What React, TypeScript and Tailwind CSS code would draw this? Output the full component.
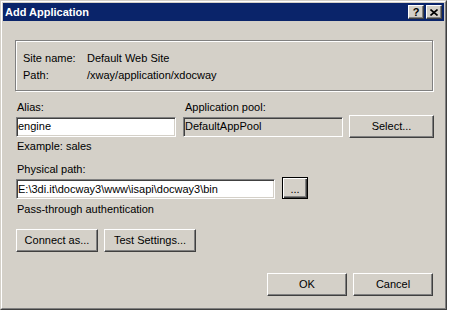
import React from "react";

const font = "font-['Liberation_Sans',Arial,sans-serif]";

const Btn = ({ label, w }: { label: string; w: string }) => (
  <button
    type="button"
    className={`${w} h-[23px] bg-[#d4d0c8] border border-t-white border-l-white border-r-[#404040] border-b-[#404040] shadow-[inset_-1px_-1px_0_#808080] text-[11px] leading-[13px] text-black flex items-center justify-center`}
  >
    {label}
  </button>
);

const Field = ({ value, w, readOnly }: { value: string; w: string; readOnly?: boolean }) => (
  <div
    className={`${w} h-[20px] ${readOnly ? "bg-[#d4d0c8]" : "bg-white"} border border-t-[#808080] border-l-[#808080] border-r-white border-b-white shadow-[inset_1px_1px_0_#404040,inset_-1px_-1px_0_#d4d0c8] pl-[1px] flex items-center text-[11px] leading-[13px] text-black whitespace-nowrap overflow-hidden`}
  >
    {value}
  </div>
);

export default function App() {
  return (
    <div className={`w-[449px] h-[312px] bg-white ${font} text-[11px] text-black`}>
      <div className="w-[447px] h-[310px] border border-t-[#d4d0c8] border-l-[#d4d0c8] border-r-[#404040] border-b-[#404040]">
        <div className="w-full h-full border border-t-white border-l-white border-r-[#808080] border-b-[#808080] bg-[#d4d0c8] p-[1px] flex flex-col">
          {/* title bar */}
          <div className="h-[18px] bg-[#0a246a] flex items-center justify-between pl-[2px] pr-[2px]">
            <span className="text-white font-bold text-[11px] leading-[13px]">Add Application</span>
            <div className="flex items-center gap-[2px]">
              <div className="w-[16px] h-[14px] bg-[#d4d0c8] border border-t-white border-l-white border-r-[#404040] border-b-[#404040] shadow-[inset_-1px_-1px_0_#808080] flex items-center justify-center">
                <span className="font-bold text-[11px] leading-[11px] text-black">?</span>
              </div>
              <div className="w-[16px] h-[14px] bg-[#d4d0c8] border border-t-white border-l-white border-r-[#404040] border-b-[#404040] shadow-[inset_-1px_-1px_0_#808080] flex items-center justify-center">
                <svg width="8" height="7" viewBox="0 0 8 7">
                  <path d="M0.5 0.5 L7.5 6.5 M7.5 0.5 L0.5 6.5" stroke="#000" strokeWidth="1.6" />
                </svg>
              </div>
            </div>
          </div>

          {/* body */}
          <div className="flex flex-col pl-[12px]">
            <div className="mt-[19px] w-[418px] h-[51px] border border-[#808080] shadow-[inset_1px_1px_0_#fff,1px_1px_0_#fff] pt-[9px] pl-[7px] leading-[17px]">
              <div className="flex">
                <span className="w-[64px]">Site name:</span>
                <span>Default Web Site</span>
              </div>
              <div className="flex">
                <span className="w-[64px]">Path:</span>
                <span>/xway/application/xdocway</span>
              </div>
            </div>

            <div className="mt-[10px] flex leading-[13px]">
              <span className="w-[168px] pl-[2px]">Alias:</span>
              <span className="pl-[2px]">Application pool:</span>
            </div>

            <div className="mt-[1px] flex items-center pl-[1px]">
              <Field value="engine" w="w-[160px]" />
              <div className="ml-[7px]">
                <Field value="DefaultAppPool" w="w-[160px]" readOnly />
              </div>
              <div className="ml-[6px]">
                <Btn label="Select..." w="w-[85px]" />
              </div>
            </div>

            <div className="mt-[2px] pl-[2px] leading-[13px]">Example: sales</div>
            <div className="mt-[10px] pl-[2px] leading-[13px]">Physical path:</div>

            <div className="mt-[1px] flex items-end pl-[1px]">
              <Field value="E:\3di.it\docway3\www\isapi\docway3\bin" w="w-[259px]" />
              <button
                type="button"
                className="ml-[7px] w-[26px] h-[22px] bg-[#d4d0c8] border border-black shadow-[inset_1px_1px_0_#fff,inset_-1px_-1px_0_#404040,inset_-2px_-2px_0_#808080] flex items-center justify-center text-[11px] leading-[13px] pt-[2px]"
              >
                ...
              </button>
            </div>

            <div className="mt-[4px] pl-[2px] leading-[13px]">Pass-through authentication</div>

            <div className="mt-[13px] flex gap-[6px] pl-[1px]">
              <Btn label="Connect as..." w="w-[82px]" />
              <Btn label="Test Settings..." w="w-[92px]" />
            </div>

            <div className="mt-[21px] flex justify-end gap-[6px] w-[418px]">
              <Btn label="OK" w="w-[80px]" />
              <Btn label="Cancel" w="w-[80px]" />
            </div>
          </div>
        </div>
      </div>
    </div>
  );
}
